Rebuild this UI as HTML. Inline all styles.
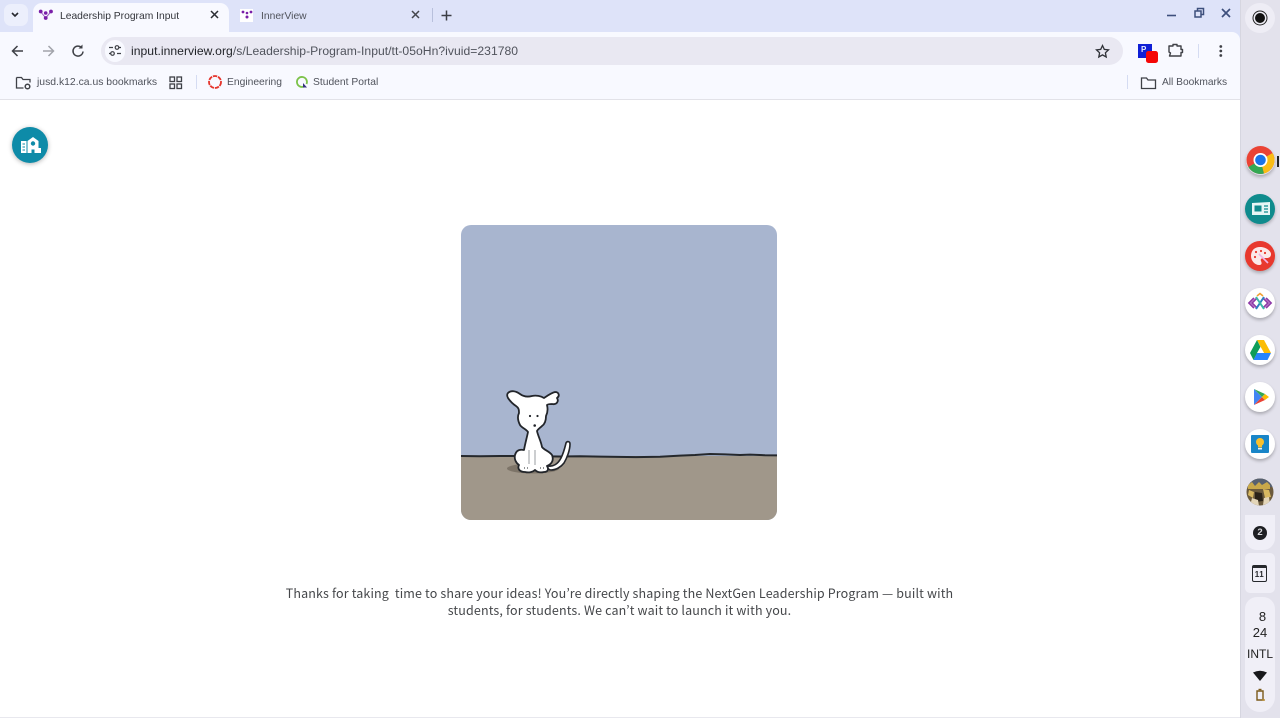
<!DOCTYPE html>
<html lang="en">
<head>
<meta charset="utf-8">
<title>Leadership Program Input</title>
<style>
html,body{margin:0;padding:0;width:1280px;height:718px;overflow:hidden;background:#fff;font-family:"Liberation Sans",sans-serif}
.a{position:absolute}
.t{position:absolute;white-space:nowrap;color:#3f4147}
svg{position:absolute;overflow:visible}
.sb{position:absolute;left:1245px;width:30px;height:30px;border-radius:50%;background:#fff;box-shadow:0 2px 3px rgba(0,0,0,.25)}
.m{text-align:center;white-space:pre;font-family:"Noto Sans CJK KR","Liberation Sans",sans-serif;font-size:12.5px;line-height:17px;color:#45474a;letter-spacing:.14px;position:absolute;left:259px;width:721px}
</style>
</head>
<body>
<!-- tab strip -->
<div class="a" style="left:0;top:0;width:1240px;height:44px;background:#dee3f9"></div>
<!-- toolbar -->
<div class="a" style="left:0;top:32px;width:1240px;height:68px;background:#f8f9ff;border-radius:0 8px 0 0"></div>
<div class="a" style="left:0;top:99px;width:1240px;height:1px;background:#e2e2e8"></div>
<!-- sidebar -->
<div class="a" style="left:1240px;top:0;width:40px;height:718px;background:#e3e2ec"></div>
<div class="a" style="left:1240px;top:0;width:1px;height:718px;background:#d6d6e0"></div>

<!-- tab list btn -->
<div class="a" style="left:4px;top:4px;width:24px;height:22px;border-radius:7px;background:#eceffc"></div>
<svg style="left:0;top:0" width="30" height="30"><path d="M12 13l3 3 3-3" fill="none" stroke="#26282e" stroke-width="1.6"/></svg>

<!-- active tab -->
<div class="a" style="left:33px;top:3px;width:196px;height:30px;background:#f8f9ff;border-radius:9px 9px 0 0"></div>
<svg style="left:38px;top:8px" width="16" height="14"><path d="M2.500 3.500L7.700 10M13 3.500L7.700 10" stroke="#9a5cc0" stroke-width="1"/><g fill="#7a1fa8"><circle cx="2.700" cy="3.500" r="1.900"/><circle cx="13" cy="3.500" r="1.900"/><circle cx="7.700" cy="5" r="1.800"/><circle cx="7.700" cy="10" r="1.900"/></g></svg>
<div class="t" style="left:60px;top:9.500px;font-size:10.300px;line-height:13px;color:#33353b">Leadership Program Input</div>
<svg style="left:209px;top:9px" width="12" height="12"><path d="M2 2l7 7M9 2l-7 7" stroke="#2b2d33" stroke-width="1.500"/></svg>

<!-- inactive tab -->
<div class="a" style="left:240px;top:9px;width:13px;height:13px;background:#fff"></div>
<svg style="left:239px;top:9px" width="16" height="12"><g fill="#7a1fa8"><circle cx="4" cy="3" r="1.400"/><circle cx="12" cy="3" r="1.400"/><circle cx="8" cy="4" r="1.300"/><circle cx="8" cy="8" r="1.500"/></g></svg>
<div class="t" style="left:261px;top:9.500px;font-size:10.300px;line-height:13px;color:#50535c">InnerView</div>
<svg style="left:410px;top:9px" width="12" height="12"><path d="M2 2l7 7M9 2l-7 7" stroke="#44464d" stroke-width="1.500"/></svg>
<div class="a" style="left:432px;top:8px;width:1px;height:14px;background:#b8c0dc"></div>
<svg style="left:440px;top:9px" width="13" height="13"><path d="M6.500 1.500v10M1.500 6.500h10" stroke="#3b3d44" stroke-width="1.500"/></svg>

<!-- window controls -->
<svg style="left:1160px;top:4px" width="76" height="20"><path d="M7 11.500h9" stroke="#3d4f7c" stroke-width="1.600"/><path d="M35 7h6v6h-6zM37.500 7V4.500h6v6H41" fill="none" stroke="#3d4f7c" stroke-width="1.500"/><path d="M62 5l8 8M70 5l-8 8" stroke="#3d4f7c" stroke-width="1.700"/></svg>

<!-- nav -->
<svg style="left:8px;top:41px" width="80" height="20"><path d="M15 10H5M9.500 5L4.500 10l5 5" fill="none" stroke="#3f4147" stroke-width="1.500"/><path d="M45 10h-10M40.500 5l5 5-5 5" fill="none" stroke="#a2a4ab" stroke-width="1.500"/><path d="M73.500 6.500A5 5 0 1 0 75 10.500" fill="none" stroke="#3f4147" stroke-width="1.500"/><path d="M74.500 3.500v4h-4z" fill="#3f4147"/></svg>

<!-- omnibox -->
<div class="a" style="left:101px;top:37px;width:1022px;height:28px;border-radius:14px;background:#e9e8f2"></div>
<div class="a" style="left:105px;top:40px;width:20px;height:22px;border-radius:11px;background:#f8f9ff"></div>
<svg style="left:108px;top:44px" width="14" height="14"><path d="M1 3.500h4M9 9.500h4" stroke="#3f4147" stroke-width="1.300"/><circle cx="9" cy="3.500" r="1.800" fill="none" stroke="#3f4147" stroke-width="1.200"/><circle cx="4.500" cy="9.500" r="1.800" fill="none" stroke="#3f4147" stroke-width="1.200"/><path d="M11 3.500h2M1 9.500h1.500" stroke="#3f4147" stroke-width="1.300"/></svg>
<div class="t" style="left:131px;top:44px;font-size:12.150px;line-height:15px;color:#1f2126;letter-spacing:.03px">input.innerview.org<span style="color:#50535c">/s/Leadership-Program-Input/tt-05oHn?ivuid=231780</span></div>
<svg style="left:1095px;top:44px" width="15" height="15"><path d="M7.500 1.500l1.800 3.900 4.200.5-3.100 2.900.8 4.200-3.700-2.100-3.700 2.100.8-4.200L1.500 5.900l4.200-.5z" fill="none" stroke="#2f3137" stroke-width="1.300"/></svg>

<!-- extensions -->
<div class="a" style="left:1138px;top:44px;width:14px;height:14px;background:#0f1fd6;color:#e8ebff;font-size:8px;font-weight:bold;line-height:12px;text-indent:3px">P</div>
<div class="a" style="left:1146px;top:51px;width:12px;height:12px;background:#f50606;border-radius:2.500px"></div>
<svg style="left:1167px;top:42px" width="18" height="18"><path d="M2 4h4V2.500h4V4h4v3.500h1.500v3H14V14H2.500l1-3L2 10z" fill="none" stroke="#3f4147" stroke-width="1.400" stroke-linejoin="round"/></svg>
<div class="a" style="left:1198px;top:44px;width:1px;height:14px;background:#d5dcf2"></div>
<svg style="left:1215px;top:43px" width="10" height="16"><g fill="#3f4147"><circle cx="5.800" cy="3.500" r="1.400"/><circle cx="5.800" cy="8" r="1.400"/><circle cx="5.800" cy="12.500" r="1.400"/></g></svg>

<!-- bookmarks -->
<svg style="left:15px;top:75px" width="18" height="16"><path d="M1.500 2.500h5l1.500 2h7v3M1.500 2.500v10.500h7" fill="none" stroke="#3f4147" stroke-width="1.300"/><circle cx="12.500" cy="11.500" r="2.300" fill="none" stroke="#3f4147" stroke-width="1.500"/></svg>
<div class="t" style="left:37px;top:75.500px;font-size:10.400px;line-height:13px;color:#50535c">jusd.k12.ca.us bookmarks</div>
<svg style="left:169px;top:76px" width="14" height="14"><g fill="none" stroke="#3f4147" stroke-width="1.300"><rect x="1" y="1" width="4.500" height="4.500"/><rect x="8" y="1" width="4.500" height="4.500"/><rect x="1" y="8" width="4.500" height="4.500"/><rect x="8" y="8" width="4.500" height="4.500"/></g></svg>
<div class="a" style="left:196px;top:75px;width:1px;height:14px;background:#d5dcf2"></div>
<svg style="left:207px;top:74px" width="16" height="16"><circle cx="8" cy="8" r="6" fill="none" stroke="#e5342b" stroke-width="1.800" stroke-dasharray="4.300 .9"/></svg>
<div class="t" style="left:227px;top:75.500px;font-size:10.300px;line-height:13px;color:#50535c">Engineering</div>
<svg style="left:295px;top:75px" width="14" height="14"><path d="M9 11.500A5 5 0 1 1 11.500 9" fill="none" stroke="#7cc24a" stroke-width="1.800"/><path d="M8 8l4 4.500H8z" fill="#35307e"/></svg>
<div class="t" style="left:313px;top:75.500px;font-size:10.300px;line-height:13px;color:#50535c">Student Portal</div>
<div class="a" style="left:1127px;top:75px;width:1px;height:14px;background:#d5dcf2"></div>
<svg style="left:1140px;top:75px" width="17" height="16"><path d="M1.500 3h5l1.500 2h7.500v8.500h-14z" fill="none" stroke="#3f4147" stroke-width="1.300"/></svg>
<div class="t" style="left:1162px;top:75.500px;font-size:10.200px;line-height:13px;color:#50535c">All Bookmarks</div>

<!-- floating button -->
<div class="a" style="left:12px;top:127px;width:36px;height:36px;border-radius:50%;background:#0e8ba8;box-shadow:0 1px 5px rgba(0,0,0,.3)"></div>
<svg style="left:20px;top:135px" width="20" height="20"><path d="M1 6h5.500v12H1zM7.500 6L13 2l5.500 4v7H21v5h-6.500v-3.500h-3V18h-4z" fill="#fff"/><circle cx="13" cy="8.500" r="2.200" fill="#0e8ba8"/><path d="M2.500 9h2.500M2.500 12h2.500M2.500 15h2.500" stroke="#0e8ba8"/></svg>

<!-- illustration -->
<div class="a" style="left:461px;top:225px;width:316px;height:295px;border-radius:10px;overflow:hidden;background:#a8b5cf">
  <div class="a" style="left:0;top:231px;width:316px;height:64px;background:#a0978a"></div>
  <svg style="left:0;top:0" width="316" height="295">
    <g transform="translate(-461 -225)">
    <path d="M461 456L480 456.300 500 456 520 456 560 456.500 580 456.200 600 456.600 636 457.100 660 456.700 680 455.600 695 455 710 454 725 454.400 740 455 750 454.600 765 455.200 777 455.400" fill="none" stroke="#25282c" stroke-width="2"/>
    <ellipse cx="533" cy="468.500" rx="26" ry="5" fill="#7d7468"/>
    <path d="M548 466C553 467 558 464 561 458C564 452 565 447 566 443C567 441 570 441 570 444C570 450 567 458 564 463C561 467 556 470 551 470C549 470 547 468 548 466Z" fill="#fff" stroke="#22252a" stroke-width="1.600"/>
    <path d="M508 393C511 390 516 391 520 394C524 397 528 397 532 396C536 395 541 396 544 398C547 396 551 393 555 392C559 392 560 396 557 398C559 401 557 405 552 404C550 404 548 404 547 405C548 409 548 412 546 416C546 420 545 424 542 426C540 428 538 429 537 431C538 436 541 441 542 447C544 450 549 451 552 455C554 460 552 464 547 466C549 469 548 472 544 472C540 473 537 472 535 470C533 472 529 473 525 472C520 472 517 469 519 465C516 463 514 459 515 455C516 451 519 449 524 450C525 444 527 437 528 432C526 429 522 428 520 425C518 421 517 417 519 413C519 410 519 408 516 406C513 404 510 401 508 398C507 396 507 394 508 393Z" fill="#fff" stroke="#22252a" stroke-width="1.800" stroke-linejoin="round"/>
    <g fill="#22252a"><circle cx="530" cy="416" r="1.100"/><circle cx="537.500" cy="416" r="1.100"/><circle cx="534.700" cy="425.500" r="1.300"/></g>
    <path d="M529 450v14M535 450v15" stroke="#9a9da2" stroke-width="1" fill="none"/>
    <path d="M524 468h1M527 468h1M540 468h1M543 468h1" stroke="#22252a"/>
    </g>
  </svg>
</div>

<!-- message -->
<div class="m" style="top:584px">Thanks for taking&nbsp; time to share your ideas! You’re directly shaping the NextGen Leadership Program — built with</div>
<div class="m" style="top:601px">students, for students. We can’t wait to launch it with you.</div>

<!-- sidebar items -->
<div class="a" style="left:1245px;top:3px;width:30px;height:30px;border-radius:50%;background:#eeedf5"></div>
<div class="a" style="left:1255px;top:13px;width:10px;height:10px;border-radius:50%;background:#111;box-shadow:0 0 0 1.500px #eeedf5,0 0 0 2.500px #222"></div>

<div class="a" style="left:1246px;top:146px;width:29px;height:29px;border-radius:50%;box-shadow:0 2px 3px rgba(0,0,0,.25)"></div>
<svg style="left:1246px;top:145px" width="30" height="30"><circle cx="14.500" cy="15" r="14" fill="#ea4335"/><path d="M14.500 15L2.400 22A14 14 0 0 0 18 28.500z" fill="#34a853"/><path d="M14.500 15L18 28.500A14 14 0 0 0 28.500 15 14 14 0 0 0 26.600 8z" fill="#f9bc15"/><circle cx="14.500" cy="15" r="7" fill="#fff"/><circle cx="14.500" cy="15" r="5.300" fill="#1a73e8"/></svg>
<div class="a" style="left:1277px;top:156px;width:2px;height:11px;background:#222"></div>

<div class="sb" style="top:193.500px;background:#0f8b8d"></div>
<svg style="left:1251px;top:201px" width="20" height="16"><path d="M1 2l18-1v13H1z" fill="#e6f5f5"/><rect x="3.500" y="4.500" width="7" height="6" fill="#0f8b8d"/><path d="M13 5h4M13 8h4M13 11h4" stroke="#0f8b8d" stroke-width="1.300"/></svg>

<div class="sb" style="top:241px;background:#e8392e"></div>
<svg style="left:1250px;top:246px" width="22" height="20"><path d="M10 1C4 1 1 5 1 10s4 9 8 9c3 0 3-2 2-4s1-3 3-3h3c2 0 4-1 4-4 0-3-5-7-11-7z" fill="#fbe9e9"/><g fill="#e8392e"><circle cx="6" cy="6" r="1.100"/><circle cx="11" cy="5" r="1.100"/><circle cx="15" cy="7" r="1.100"/><circle cx="5" cy="11" r="1.100"/></g><path d="M9 8l9 9" stroke="#f3b2e6" stroke-width="1.600"/></svg>

<div class="sb" style="top:288px"></div>
<svg style="left:1248px;top:293px" width="24" height="20"><path d="M6 5L1 10l5 5M9 5l-5 5 5 5" fill="none" stroke="#8e3aa8" stroke-width="1.800"/><path d="M18 5l5 5-5 5M15 5l5 5-5 5" fill="none" stroke="#8e3aa8" stroke-width="1.800"/><path d="M8 16L16 4" stroke="#2e7fc1" stroke-width="2"/><path d="M8 4l8 12" stroke="#3cb8a8" stroke-width="2"/><path d="M9 3l3-2.500L15 3" fill="none" stroke="#f0a030" stroke-width="1.500"/></svg>

<div class="sb" style="top:335px"></div>
<svg style="left:1249px;top:339px" width="23" height="22"><path d="M8 1h7l7 13h-7z" fill="#fbbc04"/><path d="M8 1L1 14l3.500 7L11.500 8z" fill="#0f9d58"/><path d="M4.500 21h14l3.500-7H8z" fill="#2684fc"/><path d="M8 14h7l-3.500-6z" fill="#fff"/></svg>

<div class="sb" style="top:382px"></div>
<svg style="left:1253px;top:388px" width="17" height="18"><path d="M1 1v16l8-8z" fill="#4285f4"/><path d="M1 1l8 8 3-3z" fill="#34a853"/><path d="M1 17l8-8 3 3z" fill="#ea4335"/><path d="M12 6l4 3-4 3-3-3z" fill="#fbbc04"/></svg>

<div class="sb" style="top:429px"></div>
<div class="a" style="left:1251px;top:435px;width:18px;height:18px;background:#1a86c8;border-radius:1px"></div>
<svg style="left:1255px;top:437px" width="10" height="14"><circle cx="5" cy="5" r="4" fill="#fbc02d"/><rect x="3" y="8" width="4" height="2.500" fill="#fbc02d"/><rect x="3" y="11" width="4" height="1.500" fill="#e8f0f8"/></svg>

<svg style="left:1246px;top:478px" width="28" height="28"><defs><clipPath id="c"><circle cx="14" cy="14" r="13.500"/></clipPath></defs><g clip-path="url(#c)"><rect width="28" height="28" fill="#6b5a3c"/><path d="M0 0h28v9H0z" fill="#566070"/><path d="M2 7l4-3 3 4 4-4 3 3 5-3 3 3v4H2z" fill="#c8a84a"/><path d="M3 12l5 2-1 6-5-3zM17 11l6 1 2 7-6 1z" fill="#d8b860"/><path d="M9 14l7 1 1 8-8 1z" fill="#2a2218"/><path d="M6 20l6 2 1 6H4zM18 20l5-1 1 7-7 1z" fill="#e3d5b8"/></g></svg>

<div class="a" style="left:1245px;top:515px;width:30px;height:35px;border-radius:0 0 12px 12px;background:#f0eff7"></div>
<div class="a" style="left:1253px;top:526px;width:14px;height:14px;border-radius:50%;background:#1e1f23;color:#dcdce0;font-size:9.500px;font-weight:bold;line-height:14px;text-align:center">2</div>

<div class="a" style="left:1245px;top:553px;width:30px;height:40px;border-radius:5px;background:#f0eff7"></div>
<div class="a" style="left:1252px;top:565px;width:13px;height:13px;border:1.600px solid #26282c;border-top-width:3px;border-radius:2px;color:#26282c;font-size:8px;font-weight:bold;line-height:13px;text-align:center;letter-spacing:.5px">11</div>

<div class="a" style="left:1245px;top:597px;width:30px;height:115px;border-radius:12px 12px 15px 15px;background:#f0eff7"></div>
<div class="t" style="left:1245px;top:609px;width:30px;text-align:center;font-size:13px;line-height:15px;color:#222;padding-left:5px;box-sizing:border-box">8</div>
<div class="t" style="left:1245px;top:625px;width:30px;text-align:center;font-size:13px;line-height:15px;color:#222">24</div>
<div class="t" style="left:1245px;top:647px;width:30px;text-align:center;font-size:12px;line-height:15px;color:#222">INTL</div>
<svg style="left:1252px;top:670px" width="16" height="12"><path d="M1 2.500Q8-1 15 2.500L8 11z" fill="#17181b"/></svg>
<svg style="left:1254px;top:688px" width="12" height="15"><path d="M3 3h6v9H3z" fill="none" stroke="#7b5a1a" stroke-width="1.400"/><path d="M4.500 1.500h3" stroke="#7b5a1a" stroke-width="1.400"/><path d="M8 12h3" stroke="#b7892c" stroke-width="1.400"/></svg>
<div class="a" style="left:0;top:717px;width:1240px;height:1px;background:#e8e8ee"></div>
</body>
</html>
